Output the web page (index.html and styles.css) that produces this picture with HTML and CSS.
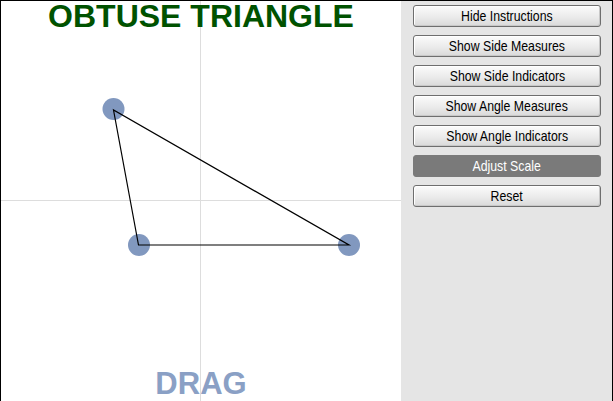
FILE: index.html
```html
<!DOCTYPE html>
<html lang="en">
  <head>
    <meta charset="UTF-8" />
    <meta name="viewport" content="width=device-width, initial-scale=1.0" />
    <title>Obtuse Triangle</title>
    <link rel="stylesheet" href="styles.css">
  </head>
  <body>
    <div class="stage">
      <div class="board">
        <svg class="board-canvas" width="400" height="400" viewBox="0 0 400 400">
          <line x1="199.5" y1="0" x2="199.5" y2="400" stroke="#dddddd" stroke-width="1" />
          <line x1="0" y1="199.5" x2="400" y2="199.5" stroke="#dddddd" stroke-width="1" />
          <circle cx="112.5" cy="108" r="11" fill="#8198bf" />
          <circle cx="138" cy="244" r="11" fill="#8198bf" />
          <circle cx="348" cy="244" r="11" fill="#8198bf" />
          <polygon points="112.5,109 137.5,244 348,244" fill="none" stroke="#000" stroke-width="1.2" />
        </svg>
        <h1 class="board-title">OBTUSE TRIANGLE</h1>
        <div class="board-hint">DRAG</div>
      </div>
      <div class="panel">
        <button class="panel-btn"><span>Hide Instructions</span></button>
        <button class="panel-btn"><span>Show Side Measures</span></button>
        <button class="panel-btn"><span>Show Side Indicators</span></button>
        <button class="panel-btn"><span>Show Angle Measures</span></button>
        <button class="panel-btn"><span>Show Angle Indicators</span></button>
        <button class="panel-btn panel-btn-active"><span>Adjust Scale</span></button>
        <button class="panel-btn"><span>Reset</span></button>
      </div>
    </div>
  </body>
</html>
```

FILE: styles.css
```css
html,
body {
  margin: 0;
  padding: 0;
  background-color: #fff;
}
.stage {
  display: flex;
  width: 611px;
  height: 400px;
  border: 1px solid #000;
  border-bottom: none;
  font-family: "Liberation Sans", Arial, sans-serif;
}
.board {
  position: relative;
  width: 400px;
  height: 400px;
  display: flex;
  flex-direction: column;
  justify-content: space-between;
  align-items: center;
}
.board-canvas {
  position: absolute;
  left: 0;
  top: 0;
}
.board-title {
  position: relative;
  margin: 0;
  font-size: 32px;
  line-height: 30px;
  font-weight: 700;
  color: #005200;
}
.board-hint {
  position: relative;
  padding-bottom: 2px;
  font-size: 31px;
  line-height: 31px;
  font-weight: 700;
  color: #8aa0c5;
}
.panel {
  width: 211px;
  height: 400px;
  box-sizing: border-box;
  padding: 4px 11px 0 12px;
  background-color: #e5e5e5;
  display: flex;
  flex-direction: column;
  gap: 8px;
}
.panel-btn {
  height: 22px;
  padding: 0;
  border: 1px solid #6e6e6e;
  border-radius: 3px;
  background: linear-gradient(#fbfbfb, #e9e9e9 60%, #d9d9d9);
  box-shadow: inset 1px 1px 0 #fff, inset -1px -1px 0 #c8c8c8;
  font-family: "Liberation Sans", Arial, sans-serif;
  font-size: 15px;
  line-height: 20px;
  color: #000;
  text-align: center;
  white-space: nowrap;
}
.panel-btn span {
  display: inline-block;
  transform: scaleX(0.82);
  letter-spacing: 0;
}
.panel-btn-active {
  border-color: #7a7a7a;
  background: #7a7a7a;
  box-shadow: none;
  color: #fff;
}
```
